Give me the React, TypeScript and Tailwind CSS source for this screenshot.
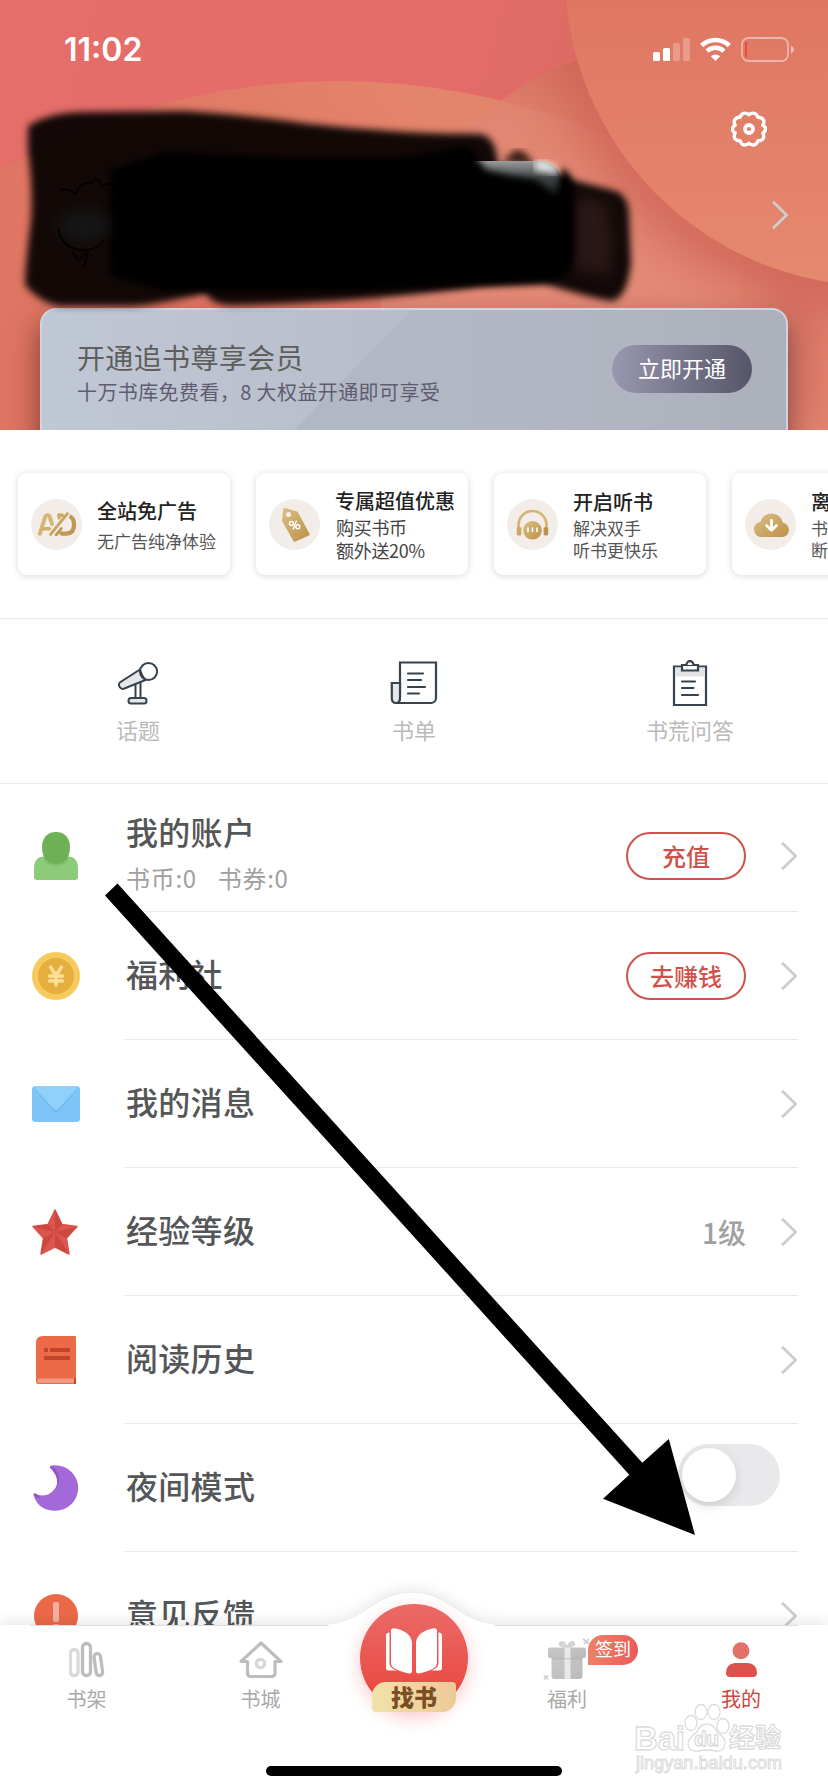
import type { ReactNode } from 'react'

interface Perk {
  title: string
  lines: string[]
  icon: ReactNode
  strong?: boolean
}

interface MenuRow {
  title: string
  sub?: string
  icon: ReactNode
  action?: string
  value?: string
  toggle?: boolean
}

/* ---------- shared bits ---------- */

function Chevron({ className = 'text-[#cdcdcd]' }: { className?: string }) {
  return (
    <svg width="17" height="28" viewBox="0 0 17 28" fill="none" className={className}>
      <path d="M1.8 1.6 14.6 14 1.8 26.4" stroke="currentColor" strokeWidth="2.8" strokeLinecap="round" strokeLinejoin="round" />
    </svg>
  )
}

/* ---------- perk icons ---------- */

const adIcon = (
  <svg width="51" height="51" viewBox="0 0 51 51" fill="none">
    <defs>
      <linearGradient id="gold" x1="0" y1="0" x2="1" y2="1">
        <stop offset="0" stopColor="#dcbf85" />
        <stop offset="1" stopColor="#bb9148" />
      </linearGradient>
    </defs>
    <circle cx="25.5" cy="25.5" r="25.5" fill="#f2ede8" />
    <g strokeLinecap="round" strokeLinejoin="round">
      <path d="M8.8 34.800 14.300 17.500Q14.700 16.200 16 16.200H17Q18.200 16.200 18.600 17.500L21 25" stroke="#d6b678" strokeWidth="4" />
      <path d="M12 29.800h6.500" stroke="#d2b070" strokeWidth="3.400" />
      <path d="M30.500 34.600H35Q43 34.600 43 25.500 43 20 39.500 17.800" stroke="#bf9750" strokeWidth="4.200" />
      <path d="M28 16.200h3" stroke="#cfab68" strokeWidth="4" />
      <path d="M28 16.500V19" stroke="#cfab68" strokeWidth="3" />
      <path d="M19.500 35.500 36.500 14.500" stroke="#cba560" strokeWidth="2.800" />
      <path d="M25.200 35.500 30 29.500" stroke="#bf9750" strokeWidth="3.400" />
    </g>
    <path d="M21.500 37 38.800 16" stroke="#f2ede8" strokeWidth="1.300" />
  </svg>
)

const tagIcon = (
  <svg width="51" height="51" viewBox="0 0 51 51" fill="none">
    <circle cx="25.5" cy="25.5" r="25.5" fill="#f2ede8" />
    <path
      d="M16 9 27.500 12.300Q28.500 12.600 29 13.500L40.600 35Q41 36 40 36.600L26 42.800Q25 43 24.400 42L13.300 22.500Q12.900 21.800 13 21L14.400 10Q14.800 8.700 16 9Z"
      fill="url(#gold)"
    />
    <circle cx="19.500" cy="15.500" r="2.600" fill="#f5efe6" />
    <g stroke="#fff" strokeWidth="1.400">
      <circle cx="22.500" cy="24.500" r="2" />
      <circle cx="28.800" cy="27.800" r="2" />
      <path d="M27.500 21.500 24 30.500" />
    </g>
  </svg>
)

const headsetIcon = (
  <svg width="51" height="51" viewBox="0 0 51 51" fill="none">
    <circle cx="25.5" cy="25.5" r="25.5" fill="#f2ede8" />
    <path d="M11.500 31V26a14 14 0 0 1 28 0v5" stroke="#d6b473" strokeWidth="2.700" />
    <rect x="9.800" y="28" width="4.600" height="8.500" rx="1.500" fill="#cda762" />
    <rect x="36.600" y="28" width="4.600" height="8.500" rx="1.500" fill="#bd934b" />
    <circle cx="25.500" cy="31.300" r="9.300" fill="url(#gold)" />
    <path d="M21 29v3.500M25.500 29v3.500M30 29v3.500" stroke="#fff" strokeWidth="1.600" strokeLinecap="round" />
  </svg>
)

const cloudIcon = (
  <svg width="51" height="51" viewBox="0 0 51 51" fill="none">
    <circle cx="25.5" cy="25.5" r="25.5" fill="#f2ede8" />
    <path d="M16 38a7.700 7.700 0 0 1-.500-15.300 11.500 11.500 0 0 1 22.300.800A7.300 7.300 0 0 1 37 38Z" fill="url(#gold)" />
    <path d="M26.500 21.500v9M21.500 26.500l5 4.700 5-4.700" stroke="#fff" strokeWidth="2.800" strokeLinecap="round" strokeLinejoin="round" />
  </svg>
)

const perks: Perk[] = [
  { title: '全站免广告', lines: ['无广告纯净体验'], icon: adIcon },
  { title: '专属超值优惠', lines: ['购买书币', '额外送20%'], icon: tagIcon, strong: true },
  { title: '开启听书', lines: ['解决双手', '听书更快乐'], icon: headsetIcon },
  { title: '离线下载', lines: ['书籍下载', '断网可读'], icon: cloudIcon },
]

/* ---------- shortcut icons ---------- */

const micIcon = (
  <svg width="42" height="46" viewBox="0 0 42 46" fill="none" stroke="#36424d" strokeWidth="2">
    <path d="M18.500 23v17M23.500 20v20" />
    <path d="M23 9.500 2.800 22.500a4 4 0 0 0 4 6.300L28.500 20Z" fill="#e6e7e8" />
    <circle cx="31.500" cy="11.500" r="8.600" fill="#fff" />
    <path d="M23 9.500q2 7 5.500 10.300" />
    <rect x="11.500" y="38" width="18" height="5.500" rx="2.500" fill="#e6e7e8" />
  </svg>
)

const listIcon = (
  <svg width="48" height="44" viewBox="0 0 48 44" fill="none" stroke="#36424d" strokeWidth="2.200">
    <path d="M10 1.500H46V37a5 5 0 0 1-5 5H6q4-.500 4-6Z" fill="#fff" />
    <path d="M10 22H1.800v15q0 5 4.200 5t4-6Z" fill="#e6e7e8" />
    <path d="M18 12.500h15M18 19h13M18 26h17M18 32.500h11" strokeLinecap="round" />
  </svg>
)

const clipIcon = (
  <svg width="36" height="48" viewBox="0 0 36 48" fill="none" stroke="#36424d" strokeWidth="2.200">
    <path d="M2 7.500h32V46H2Z" fill="#fff" />
    <path d="M3 8.500h30v9H3Z" fill="#e3e4e6" stroke="none" />
    <path d="M10 6h16v5.500H10Z" fill="#fff" />
    <path d="M14.500 6a3.500 3.800 0 0 1 7 0" fill="#fff" />
    <path d="M10 22.500h13M10 29h11.500M10 36h16" strokeLinecap="round" />
  </svg>
)

const shortcuts = [
  { label: '话题', icon: micIcon },
  { label: '书单', icon: listIcon },
  { label: '书荒问答', icon: clipIcon },
]

/* ---------- menu icons ---------- */

const userIcon = (
  <svg width="48" height="48" viewBox="0 0 48 48">
    <path d="M2 37Q2 24.500 12 24.500H36Q46 24.500 46 37v8q0 3-3 3H5q-3 0-3-3Z" fill="#8bcb79" />
    <path d="M11 26q4 8.500 13 8.500T37 26Z" fill="#7fc16c" />
    <path d="M24 0C33 0 38 6 38 15.500S33 32 24 32 10 25 10 15.500 15 0 24 0Z" fill="#6db157" />
  </svg>
)

const coinIcon = (
  <svg width="48" height="48" viewBox="0 0 48 48" fill="none">
    <circle cx="24" cy="24" r="24" fill="#f6ca5b" />
    <circle cx="24" cy="24" r="18" fill="#e4af3e" />
    <path d="M18.500 15 24 23.500 29.500 15M24 23.500V33M17.500 24h13M17.500 29h13" stroke="#fadf95" strokeWidth="3.400" strokeLinecap="round" />
  </svg>
)

const mailIcon = (
  <svg width="48" height="36" viewBox="0 0 48 36">
    <rect width="48" height="36" rx="3.500" fill="#7ec4f6" />
    <path d="M1.500 1.500 21 24.500q3 3.200 6 0L46.500 1.500Z" fill="#71b9ee" />
    <path d="M1.500 1Q2.500 0 4 0H44q1.500 0 2.500 1L26.500 22.500q-2.500 2.500-5 0Z" fill="#92d0fc" />
  </svg>
)

const starIcon = (
  <svg className="mr-[2px]" width="46" height="46" viewBox="0 0 46 46">
    <path
      d="M23 1 30 15.500 45 17.500 34.500 29 37 45 23 38 9 45 11.500 29 1 17.500 16 15.500Z"
      fill="#de554d"
      stroke="#de554d"
      strokeWidth="1.500"
      strokeLinejoin="round"
    />
    <path d="M23 .500V23L30 15.500ZM45.500 17.500 23 23 34.500 29ZM37.500 45.500 23 23V38ZM9 45.500 23 23 11.500 29ZM.500 17.500 23 23 16 15.500Z" fill="#cb483f" />
  </svg>
)

const bookIcon = (
  <svg width="40" height="48" viewBox="0 0 40 48">
    <path d="M7 0H39q1 0 1 1V48H2q-2 0-2-3V7Q0 0 7 0Z" fill="#ed6a49" />
    <path d="M2 42.500H38V47H2Q.500 45 2 42.500Z" fill="#f09a85" />
    <path d="M38 42h2v6h-2ZM8 12h4v4H8ZM14 12h20v4H14ZM8 20h26v4H8Z" fill="#c2452a" />
  </svg>
)

const moonIcon = (
  <svg width="46" height="46" viewBox="0 0 46 46">
    <path d="M17 1.200Q17.500.300 22.500.300A22.700 22.700 0 0 1 22.500 45.700Q5 45.500.800 30.500C0 27.500 2.500 28.500 4.500 29.600 17 34.500 32 19 20.500 4.500 18.500 3.500 16.500 3.500 17 1.200Z" fill="#a369d8" />
    <path d="M17 1.200q0 2.300 2 3.600 8 10 4 18.500 7-11-2-20.500Q18.500 2 17 1.200ZM.800 30.500q3 3 7 2.300L3 28.800Q.200 27.500.800 30.500Z" fill="#8f57c4" />
  </svg>
)

const alertIcon = (
  <svg width="44" height="44" viewBox="0 0 44 44">
    <circle cx="22" cy="22" r="22" fill="#ec6948" />
    <rect x="19" y="8" width="6" height="20" rx="2" fill="#f4b1a3" />
    <rect x="19" y="30" width="6" height="6" rx="2" fill="#f4b1a3" />
  </svg>
)

const menu: MenuRow[] = [
  { title: '我的账户', sub: '书币:0', icon: userIcon, action: '充值' },
  { title: '福利社', icon: coinIcon, action: '去赚钱' },
  { title: '我的消息', icon: mailIcon },
  { title: '经验等级', icon: starIcon, value: '1级' },
  { title: '阅读历史', icon: bookIcon },
  { title: '夜间模式', icon: moonIcon, toggle: true },
  { title: '意见反馈', icon: alertIcon },
]

/* ---------- header ---------- */

function HeaderBackdrop() {
  return (
    <svg className="absolute inset-0" width="828" height="430" viewBox="0 0 828 430">
      <defs>
        <linearGradient id="base" gradientUnits="userSpaceOnUse" x1="0" y1="0" x2="760" y2="200">
          <stop offset="0" stopColor="#e56e69" />
          <stop offset="0.600" stopColor="#e36c69" />
          <stop offset="0.780" stopColor="#da6b60" />
          <stop offset="1" stopColor="#d56c5c" />
        </linearGradient>
        <linearGradient id="hill" gradientUnits="userSpaceOnUse" x1="0" y1="380" x2="420" y2="90">
          <stop offset="0" stopColor="#df7462" />
          <stop offset="0.500" stopColor="#e07764" />
          <stop offset="1" stopColor="#e3856b" />
        </linearGradient>
        <linearGradient id="bubble" x1="0" y1="0" x2="0" y2="1">
          <stop offset="0" stopColor="#df735f" />
          <stop offset="0.550" stopColor="#e07763" />
          <stop offset="1" stopColor="#e5896f" />
        </linearGradient>
        <linearGradient id="glow" gradientUnits="userSpaceOnUse" x1="0" y1="50" x2="0" y2="430">
          <stop offset="0" stopColor="#d8735f" />
          <stop offset="0.180" stopColor="#de806d" />
          <stop offset="0.400" stopColor="#e28672" />
          <stop offset="1" stopColor="#e38470" />
        </linearGradient>
        <filter id="soft" x="-30%" y="-30%" width="160%" height="160%" colorInterpolationFilters="sRGB">
          <feGaussianBlur stdDeviation="24" />
        </filter>
        <clipPath id="midClip">
          <circle cx="672" cy="338" r="293" />
        </clipPath>
      </defs>
      <rect width="828" height="430" fill="url(#base)" />
      <circle cx="338" cy="761" r="680" fill="url(#hill)" />
      <g clipPath="url(#midClip)">
        <circle cx="672" cy="338" r="293" fill="url(#glow)" />
        <circle cx="338" cy="761" r="680" fill="#e89a84" opacity="0.220" />
        <circle cx="872" cy="-18" r="330" fill="#cf6456" opacity="0.850" filter="url(#soft)" />
      </g>
      <path d="M788 430Q806 350 760 262L828 282V430Z" fill="#cf6456" opacity="0.700" filter="url(#soft)" />
      <circle cx="878" cy="-27" r="313" fill="url(#bubble)" />
    </svg>
  )
}

// Brush strokes that hide the account name and avatar
function Redaction() {
  return (
    <svg className="absolute left-0 top-0" width="828" height="320" viewBox="0 0 828 320">
      <defs>
        <filter id="brush" x="-5%" y="-10%" width="110%" height="120%" colorInterpolationFilters="sRGB">
          <feGaussianBlur stdDeviation="3.500" />
        </filter>
        <filter id="brushWide" x="-40%" y="-40%" width="180%" height="180%" colorInterpolationFilters="sRGB">
          <feGaussianBlur stdDeviation="7" />
        </filter>
        <linearGradient id="pill" gradientUnits="userSpaceOnUse" x1="0" y1="161" x2="0" y2="206">
          <stop offset="0" stopColor="#9a9d9d" />
          <stop offset="0.400" stopColor="#3d4242" />
          <stop offset="1" stopColor="#050808" />
        </linearGradient>
      </defs>
      <path
        d="M28 126Q50 112 85 112L185 111Q250 115 310 124 400 134 480 134 496 136 498 165L540 172 612 190Q629 194 629 215L631 262Q628 296 613 301 598 300 545 284L480 286Q370 302 240 305 212 307 206 293 150 306 130 306L60 306Q40 303 25 285 25 268 31 220 33 190 28 150Z"
        fill="#0b0504"
        fillOpacity="0.970"
        filter="url(#brush)"
      />
      <path d="M574 196 606 202 612 240 610 276 574 268Z" fill="#2a1815" filter="url(#brushWide)" />
      <path d="M502 162 514 151Q520 148 526 154L536 166Z" fill="#3a1e18" filter="url(#brush)" />
      <path d="M460 161H541Q562 164 562 186V206H460Z" fill="url(#pill)" />
      <path d="M535 161H541Q556 163 560 174L535 170Z" fill="#fff" opacity="0.850" filter="url(#brush)" />
      <path
        d="M165 152 300 158 400 158 468 146 486 170 510 176 536 180 556 196 562 168Q572 172 574 190V255Q572 278 550 281L470 286 350 291H165L110 276V170Z"
        fill="#000"
        filter="url(#brush)"
      />
      <ellipse cx="84" cy="226" rx="26" ry="16" fill="#141616" filter="url(#brushWide)" />
      <g stroke="#000" strokeWidth="2" fill="none" opacity="0.800">
        <path d="M60 190q8-2 16 4 4-14 16-10 4-12 10 2 10-6 14 4" />
        <path d="M58 228q4 22 26 22 14 0 20-10M72 252l6 8 10-8-4 16" />
      </g>
    </svg>
  )
}

function StatusBar() {
  return (
    <div className="relative flex h-[88px] items-start justify-between pl-[64px] pr-[34px] pt-[37px] text-white">
      <span className="mt-[-7px] font-['Inter'] text-[32px] font-semibold leading-[40px]">11:02</span>
      <div className="flex items-start gap-[10px]">
        <svg width="37" height="25" viewBox="0 0 37 25" fill="currentColor">
          <rect x="0" y="15" width="7" height="9" rx="1.500" />
          <rect x="10" y="11" width="7" height="13" rx="1.500" />
          <rect x="20" y="6" width="7" height="18" rx="1.500" opacity="0.250" />
          <rect x="30" y="1" width="7" height="23" rx="1.500" opacity="0.250" />
        </svg>
        <svg width="31" height="25" viewBox="0 0 31 25" fill="none" stroke="currentColor">
          <path d="M1.700 8.500a20 20 0 0 1 27.600 0" strokeWidth="4.600" />
          <path d="M7 14.200a12.200 12.200 0 0 1 17 0" strokeWidth="4.400" />
          <path d="M15.500 24 10.800 19.300a6.800 6.800 0 0 1 9.400 0Z" fill="currentColor" stroke="none" />
        </svg>
        <svg width="53" height="25" viewBox="0 0 53 25" fill="none">
          <rect x="1" y="1" width="46" height="23" rx="6.500" stroke="#fff" strokeOpacity="0.450" strokeWidth="1.800" />
          <rect x="4" y="5" width="2" height="15" fill="#f04a3e" />
          <path d="M50 8.500q3 1.500 3 4t-3 4Z" fill="#fff" fillOpacity="0.500" />
        </svg>
      </div>
    </div>
  )
}

function Gear() {
  return (
    <svg width="36" height="36" viewBox="0 0 36 36" fill="none" stroke="#fff" strokeWidth="3.400" strokeLinejoin="round">
      <path d="M18 3.700Q20.500 1.500 23.500 2.300 26 3 27 6.200 30.500 6 32.300 8.800 33.700 11.200 31.800 14.200 34.800 15.800 34.500 18.300 34.500 20.700 31.800 22 33.600 25.200 32.200 27.500 30.300 30 27 29.800 26 33 23.500 33.800 20.500 34.500 18 32.300 15.500 34.500 12.500 33.800 10 33 9 29.800 5.700 30 3.800 27.500 2.400 25.200 4.200 22 1.500 20.700 1.500 18.300 1.200 15.800 4.200 14.200 2.300 11.200 3.700 8.800 5.500 6 9 6.200 10 3 12.500 2.300 15.500 1.500 18 3.700Z" />
      <circle cx="18" cy="18" r="4" strokeWidth="3.800" />
    </svg>
  )
}

function Header() {
  return (
    <header className="relative flex h-[430px] shrink-0 flex-col overflow-hidden">
      <HeaderBackdrop />
      <StatusBar />
      <div className="relative flex justify-end pr-[61px] pt-[23px]">
        <Gear />
      </div>
      <div className="relative flex grow justify-end pr-[39px] pt-[54px]">
        <Chevron className="text-[#d3cdca]" />
      </div>
      <div className="relative mx-10 h-[122px]">
        <div className="relative flex h-[140px] items-start justify-between rounded-[16px] border-2 border-[#cdd4e3] bg-linear-to-r from-[#c1c8d5] to-[#acb0bb] pl-[35px] pr-[34px] shadow-[0_14px_28px_rgba(60,20,20,0.6)]">
          <svg className="absolute inset-0" width="744" height="120" viewBox="0 0 744 120">
            <defs>
              <linearGradient id="sheen" x1="0" y1="0" x2="1" y2="0">
                <stop offset="0" stopColor="#9da5b5" stopOpacity="0.300" />
                <stop offset="0.700" stopColor="#a6abb7" stopOpacity="0.050" />
              </linearGradient>
            </defs>
            <path d="M370 0H730V120H252Z" fill="url(#sheen)" />
          </svg>
          <div className="relative pt-[28px]">
            <div className="text-[28px] leading-[38px] tracking-[0.350px] text-[#5e5e5c]">开通追书尊享会员</div>
            <div className="pt-[2px] text-[20px] leading-[28px] tracking-[0.400px] text-[#5f5c72]">十万书库免费看，8 大权益开通即可享受</div>
          </div>
          <button className="relative mt-[35px] h-[48px] w-[140px] rounded-full bg-linear-to-r from-[#9a98b0] to-[#575569] pb-[3px] text-[22px] text-white">
            立即开通
          </button>
        </div>
      </div>
      <Redaction />
    </header>
  )
}

/* ---------- content ---------- */

function PerkStrip() {
  return (
    <section className="flex h-[189px] shrink-0 gap-[26px] overflow-hidden border-b border-[#e9e9e9] pl-[18px] pt-[43px]">
      {perks.map((perk) => (
        <div key={perk.title} className="flex h-[102px] w-[212px] shrink-0 items-center rounded-[9px] bg-white pl-[13px] shadow-[0_1px_7px_rgba(40,40,80,0.18)]">
          {perk.icon}
          <div className="ml-[15px] whitespace-nowrap">
            <div className={perk.lines.length > 1 ? 'text-[20px] font-medium leading-[28px] text-[#222]' : 'mb-[4px] text-[20px] font-medium leading-[28px] text-[#222]'}>
              {perk.title}
            </div>
            {perk.lines.map((line) => (
              <div
                key={line}
                className={
                  perk.strong
                    ? 'relative left-px top-px text-[18px] leading-[23px] tracking-[-0.300px] text-[#444]'
                    : 'relative top-px text-[17px] leading-[22px] text-[#555]'
                }
              >
                {line}
              </div>
            ))}
          </div>
        </div>
      ))}
    </section>
  )
}

function Shortcuts() {
  return (
    <section className="grid h-[165px] shrink-0 grid-cols-3 border-b border-[#e9e9e9]">
      {shortcuts.map((item) => (
        <div key={item.label} className="flex flex-col items-center pt-[39px]">
          <div className="flex h-[50px] items-center">{item.icon}</div>
          <span className="mt-[5px] text-[22px] leading-[32px] text-[#bababa]">{item.label}</span>
        </div>
      ))}
    </section>
  )
}

function Toggle() {
  return (
    <div className="mr-[18px] mt-[-25px] flex h-[62px] w-[102px] items-center rounded-full bg-[#e9e9eb] px-[4px]">
      <div className="size-[54px] rounded-full bg-white shadow-[0_4px_12px_rgba(0,0,0,0.12)]" />
    </div>
  )
}

function Menu() {
  return (
    <section className="min-h-0 grow overflow-hidden">
      {menu.map((row) => (
        <div key={row.title} className="flex h-[128px] pr-[30px]">
          <div className={row.sub ? 'flex w-[124px] items-center justify-center pr-[12px] pt-[16px]' : 'flex w-[124px] items-center justify-center pr-[12px]'}>
            {row.icon}
          </div>
          <div className="flex grow items-center border-b border-[#e9e9e9] pl-[2px]">
            <div className={row.sub ? 'grow pt-[10px]' : 'grow pb-[5px]'}>
              <div className="text-[32px] font-medium leading-[44px] tracking-[0.300px] text-[#555657]">{row.title}</div>
              {row.sub && (
                <div className="flex gap-[21px] pt-[7px] text-[24px] leading-[36px] tracking-[0.700px] text-[#9f9f9f]">
                  <span>{row.sub}</span>
                  <span>书券:0</span>
                </div>
              )}
            </div>
            <div className={row.sub ? 'flex items-center gap-[35px] pt-[16px]' : 'flex items-center gap-[35px]'}>
              {row.action && (
                <button className="h-[48px] w-[120px] rounded-full border-2 border-[#d0524c] pb-px text-[24px] font-medium leading-[43px] text-[#cf514b]">
                  {row.action}
                </button>
              )}
              {row.value && <span className="text-[28px] font-medium text-[#a0a0a0]">{row.value}</span>}
              {row.toggle ? <Toggle /> : <Chevron />}
            </div>
          </div>
        </div>
      ))}
    </section>
  )
}

/* ---------- tab bar ---------- */

function FindBook() {
  return (
    <div className="relative mt-[-21px] flex size-[108px] items-start justify-center rounded-full bg-linear-to-b from-[#ea6a68] to-[#ea4038] shadow-[0_6px_18px_rgba(240,60,60,0.28)]">
      <svg className="mt-[24px]" width="56" height="47" viewBox="0 0 56 47" fill="#fff">
        <path d="M0 7Q0 5 3.500 4.500V36Q4 40 11 42.500H3Q0 42.500 0 40ZM56 7Q56 5 52.500 4.500V36Q52 40 45 42.500H53Q56 42.500 56 40Z" />
        <path d="M5 3Q5 0 8 .300 24 3 26 14V43Q26 46 23 45.500 12 43 6.500 39 5 37.500 5 35ZM51 3Q51 0 48 .300 32 3 30 14V43Q30 46 33 45.500 44 43 49.500 39 51 37.500 51 35Z" />
      </svg>
      <div className="absolute bottom-0 left-[12px] h-[30px] w-[84px] rounded-bl-[4px] rounded-br-[14px] rounded-tl-[14px] rounded-tr-[4px] bg-linear-to-r from-[#f0e2a9] to-[#ecca98] text-center text-[23px] font-black leading-[29px] text-[#7b4f24]">
        找书
      </div>
    </div>
  )
}

function TabBar() {
  return (
    <nav className="relative h-[167px] shrink-0 bg-white">
      {/* raised edge around the centre button */}
      <svg className="absolute left-0 top-[-52px] drop-shadow-[0_-3px_7px_rgba(0,0,0,0.1)]" width="828" height="219" viewBox="0 0 828 219">
        <path d="M0 52H325C365 50 374 20 412 20S458 50 499 52H828V219H0Z" fill="#fff" />
      </svg>
      <div className="absolute left-[30px] top-0 h-px w-[298px] bg-[#dedede]" />
      <div className="absolute right-[30px] top-0 h-px w-[304px] bg-[#dedede]" />
      <div className="relative flex h-[110px] text-[20px] leading-[28px] text-[#a9a9a9]">
        <div className="flex w-[173px] flex-col items-center pt-[16px]">
          <svg width="36" height="38" viewBox="0 0 36 38" fill="none" strokeWidth="3.300">
            <rect x="1.500" y="8.500" width="7.500" height="26" rx="3.500" stroke="#dadada" />
            <rect x="13.500" y="2.500" width="8" height="32" rx="3.800" stroke="#bdbdbd" />
            <rect x="26" y="12.500" width="6.500" height="22" rx="3.200" transform="rotate(-8 30 23)" stroke="#bdbdbd" />
          </svg>
          <span className="mt-[6px]">书架</span>
        </div>
        <div className="flex w-[175px] flex-col items-center pt-[16px]">
          <svg width="44" height="38" viewBox="0 0 44 38" fill="none" strokeWidth="3.200">
            <path d="M22 2 42 20.500H36V32q0 3.500-3.500 3.500h-21Q8.500 35.500 8.500 32V20.500H2Z" stroke="#bdbdbd" strokeLinejoin="round" />
            <circle cx="21.500" cy="22.500" r="4.200" stroke="#d6d6d6" />
          </svg>
          <span className="mt-[6px]">书城</span>
        </div>
        <div className="flex w-[132px] justify-center">
          <FindBook />
        </div>
        <div className="relative flex w-[174px] flex-col items-center pt-[13px]">
          <svg width="48" height="44" viewBox="0 0 48 44">
            <defs>
              <linearGradient id="gift" x1="0" y1="0" x2="1" y2="1">
                <stop offset="0" stopColor="#c9c9c9" />
                <stop offset="1" stopColor="#bababa" />
              </linearGradient>
            </defs>
            <path d="M24 10Q14 9 16 4.500q4-4 8 3 4-7 8-3 2 4.500-8 5.500Z" fill="#d4d4d4" />
            <rect x="5" y="9.500" width="38" height="10.500" rx="2" fill="url(#gift)" />
            <path d="M8.500 20h31V38q0 3-3 3h-25q-3 0-3-3Z" fill="url(#gift)" />
            <path d="M21.500 9.500h6V41h-6Z" fill="#e8e8e8" />
            <path d="M8.500 20h31v1.500h-31Z" fill="#ababab" opacity="0.500" />
            <path d="m1 37.500 4 4m0-4-4 4M40 1l6 5m0-5-5 5" stroke="#cdcdcd" strokeWidth="1.700" />
          </svg>
          <span className="mt-[3px]">福利</span>
          <span className="absolute left-[108px] top-[10px] h-[30px] w-[50px] rounded-full rounded-bl-none bg-linear-to-r from-[#ef8166] to-[#ea5a5b] text-center text-[18px] leading-[27px] text-white">
            签到
          </span>
        </div>
        <div className="flex w-[173px] flex-col items-center pl-px pt-[17px] text-[#d0443e]">
          <svg width="31" height="36" viewBox="0 0 31 36">
            <circle cx="15" cy="8.700" r="8.500" fill="#e2716b" />
            <path d="M9 21H22q9 1 9 10 0 4-4 4H4q-4 0-4-4 0-9 9-10Z" fill="#dc534d" />
          </svg>
          <span className="mt-[7px]">我的</span>
        </div>
      </div>
      <div className="relative mx-auto mt-[31px] h-[10px] w-[296px] rounded-full bg-black" />
      <Watermark />
    </nav>
  )
}

function Watermark() {
  return (
    <svg className="absolute left-[630px] top-[74px]" width="160" height="84" viewBox="0 0 160 84" fill="#fff" stroke="#dcdcdc" strokeWidth="1.300" fontFamily="Liberation Sans, Noto Sans CJK SC, sans-serif">
      <text x="4" y="51" fontSize="33" fontWeight="700" textLength="51">Bai</text>
      <ellipse cx="61" cy="24" rx="6" ry="7.500" />
      <ellipse cx="71" cy="13" rx="6" ry="7.500" />
      <ellipse cx="84" cy="13" rx="6" ry="7.500" />
      <ellipse cx="93" cy="27" rx="6" ry="7.500" />
      <path d="M77 25Q84 25 87 33 96 39 95 45 94 53 86 52 77 50 68 52 59 53 58 45 58 39 67 33 70 25 77 25Z" />
      <text x="64" y="47" fontSize="21" fontWeight="700" textLength="25">du</text>
      <text x="99" y="48" fontSize="26" fontWeight="700" fontFamily="Noto Sans CJK SC, sans-serif" textLength="52">经验</text>
      <text x="6" y="70" fontSize="18" textLength="146" strokeWidth="1">jingyan.baidu.com</text>
    </svg>
  )
}

function PointerArrow() {
  return (
    <svg className="pointer-events-none absolute left-0 top-0" width="828" height="1792" viewBox="0 0 828 1792">
      <path d="M117.500 883.500 642.300 1462.700 668.800 1439 695 1535 603 1498.700 629.300 1474.700 105 895.500Z" />
    </svg>
  )
}

export default function App() {
  return (
    <div className="relative flex h-[1792px] w-[828px] flex-col overflow-hidden bg-white font-['Noto_Sans_CJK_SC',sans-serif]">
      <Header />
      <PerkStrip />
      <Shortcuts />
      <Menu />
      <TabBar />
      <PointerArrow />
    </div>
  )
}
